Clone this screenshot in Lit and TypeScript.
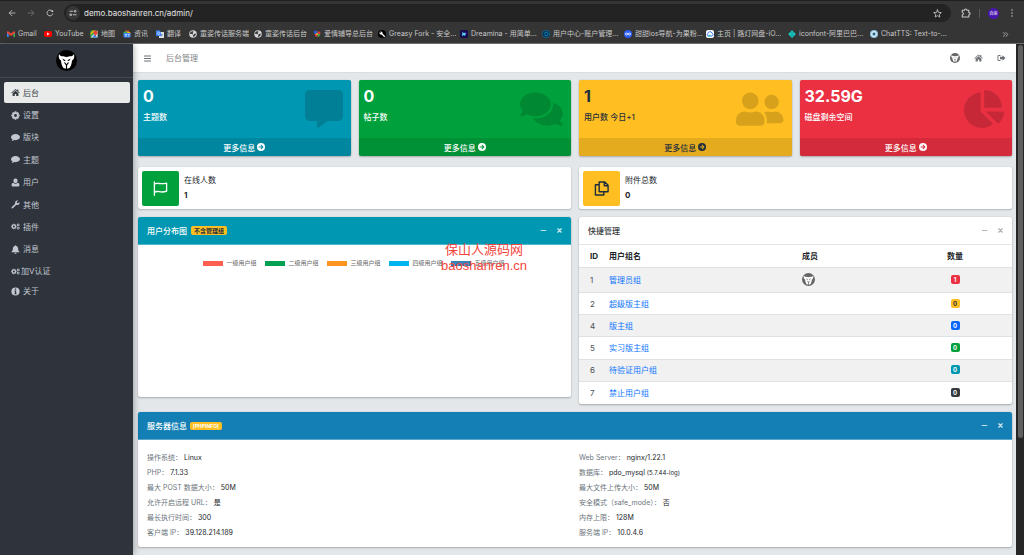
import { LitElement, html, css, svg, type TemplateResult } from "lit";
import { customElement } from "lit/decorators.js";

const gearPath = (cx: number, cy: number, r: number, hole: number, teeth = 8): string => {
  const pts: string[] = [];
  for (let i = 0; i < teeth; i++) {
    const a = (i / teeth) * Math.PI * 2;
    const w = Math.PI / teeth;
    for (const [off, rad] of [[-w * 0.95, 0.74], [-w * 0.5, 1], [w * 0.5, 1], [w * 0.95, 0.74]]) {
      pts.push(`${(cx + Math.sin(a + off) * r * rad).toFixed(2)} ${(cy - Math.cos(a + off) * r * rad).toFixed(2)}`);
    }
  }
  return `M${pts.join("L")}ZM${cx - hole} ${cy}a${hole} ${hole} 0 1 0 ${hole * 2} 0a${hole} ${hole} 0 1 0 ${-hole * 2} 0Z`;
};

const filled = (viewBox: string, d: string) =>
  html`<svg viewBox=${viewBox} fill="currentColor" fill-rule="evenodd" aria-hidden="true"><path d=${d} /></svg>`;

const stroked = (d: string, width = 1.6) =>
  html`<svg viewBox="0 0 16 16" fill="none" stroke="currentColor" stroke-width=${width} stroke-linecap="round" stroke-linejoin="round" aria-hidden="true"><path d=${d} /></svg>`;

const mask = (bg: string) => html`<svg viewBox="0 0 42 42" aria-hidden="true">
  <circle cx="21" cy="21" r="21" fill=${bg} />
  <path fill="#fff" d="M6 8C4.500 14 6 19 10 21C10.500 27 12 32 15 36Q21 39 27 36C30 32 31.500 27 32 21C36 19 37.500 14 36 8C34.500 11.500 31 13 27 12.500Q21 15 15 12.500C11 13 7.500 11.500 6 8Z" />
  <path fill=${bg} d="M12.500 17L19 20.500L18 22.500Q14 21.500 12.500 17ZM29.500 17L23 20.500L24 22.500Q28 21.500 29.500 17Z" />
  <path fill="none" stroke=${bg} stroke-width="2.400" d="M17 25L21 30L25 25M21 29V38" />
</svg>`;

const doubleGear = filled("0 0 22 16", gearPath(7, 8, 6.6, 2.5) + gearPath(17.5, 4, 3.7, 1.3, 6) + gearPath(17.5, 12, 3.7, 1.3, 6));
const bubble = filled("0 0 18 16", "M9 1C4.200 1 0 3.800 0 7.400c0 1.900 1.300 3.600 3.300 4.700c-.3 1.300-1 2.200-1.900 3c1.900-.1 3.500-.8 4.800-2c.9.2 1.800.3 2.800.3c4.800 0 9-2.700 9-6.200S13.800 1 9 1Z");

const icons: Record<string, TemplateResult> = {
  home: filled("0 0 18 16", "M9 1L0.500 8.300L1.500 9.500L9 3.200L16.500 9.500L17.500 8.300L14.700 5.900V2H12.500V4ZM9 4.500L3.200 9.400V15H7.500V11H10.500V15H14.800V9.400Z"),
  gear: filled("0 0 16 16", gearPath(8, 8, 7.600, 2.600)),
  bubble,
  user: filled("0 0 16 16", "M8 1a3.700 3.700 0 0 1 3.700 3.900C11.700 7.200 10 9 8 9S4.300 7.200 4.300 4.900A3.700 3.700 0 0 1 8 1ZM4 8.500C5 9.700 6.400 10.400 8 10.400S11 9.700 12 8.500C14 8.800 15 10.500 15 13C15 14.500 14 15.300 12.700 15.300H3.300C2 15.300 1 14.500 1 13C1 10.500 2 8.800 4 8.500Z"),
  wrench: filled("0 0 16 16", "M15.300 4.200C15.800 6.800 13.800 9 11.300 9C10.600 9 10 8.800 9.500 8.600L3.700 14.400C2.900 15.200 1.900 15.200 1.300 14.600C.7 14 .8 13.100 1.500 12.300L7.400 6.500C6.700 4 8.200 1 11.300 .8C12 .8 12.600 .9 13.100 1.200L10.300 2.900V4.900L12 5.900Z"),
  gears: doubleGear,
  bell: filled("0 0 16 16", "M8 .5C8.700.5 9.100 1 9.100 1.700C11.500 2.200 12.700 4.100 12.700 6.400C12.700 9.600 13.500 11 15.300 12.500V13H.7V12.500C2.500 11 3.300 9.600 3.300 6.400C3.300 4.100 4.500 2.200 6.900 1.700C6.900 1 7.300.5 8 .5ZM6 13.700H10C10 14.900 9.100 15.700 8 15.700S6 14.900 6 13.700Z"),
  info: filled("0 0 16 16", "M8 .7a7.300 7.300 0 1 1 0 14.600a7.300 7.300 0 1 1 0-14.600ZM6.900 2.700V4.900H9.200V2.700ZM6 6.200V7.500H6.900V11.500H6V12.800H10V11.500H9.200V6.200Z"),
  signout: filled("0 0 18 16", "M7 2H3.500Q1 2 1 4.500V11.500Q1 14 3.500 14H7V12.200H3.800Q2.800 12.200 2.800 11.200V4.800Q2.800 3.800 3.800 3.800H7ZM11 2.500L17 8L11 13.500V10.300H6V5.700H11Z"),
  menu: stroked("M2.500 3.500H13.500M2.500 8H13.500M2.500 12.500H13.500", 1.8),
  minus: stroked("M2.500 8H13.500", 2),
  times: stroked("M4 4L12 12M12 4L4 12", 2.600),
  go: filled("0 0 16 16", "M8 0a8 8 0 1 1 0 16a8 8 0 1 1 0-16ZM8.300 3.200L7.100 4.400L9.600 7H3.400V9H9.600L7.100 11.600L8.300 12.800L13.100 8Z"),
  flag: html`<svg viewBox="0 0 16 16" fill="none" stroke="currentColor" stroke-width="1.400" stroke-linejoin="round" stroke-linecap="round" aria-hidden="true"><path d="M1.500 1V15.200M1.500 3.200C5 1.200 7.500 4.200 14.500 2.200V10.800C8 13.500 5.500 9.700 1.500 11.800" /></svg>`,
  copy: html`<svg viewBox="0 0 16 16" fill="none" stroke="currentColor" stroke-width="1.500" stroke-linejoin="round" aria-hidden="true"><path d="M6.200 1H11.500L15 4.500V11.500H5.500V1ZM11 1V5H15M5.500 4H1.500V15H10.500V11.500" /></svg>`,
  commentAlt: filled("0 0 512 512", "M448 0H64C28.7 0 0 28.7 0 64v288c0 35.3 28.7 64 64 64h96v84c0 9.800 11.200 15.500 19.100 9.700L304 416h144c35.300 0 64-28.700 64-64V64c0-35.300-28.700-64-64-64z"),
  comments: filled("0 0 576 512", "M416 192c0-88.400-93.100-160-208-160S0 103.600 0 192c0 34.300 14.100 65.900 38 92-13.400 30.200-35.500 54.200-35.800 54.500-2.200 2.300-2.800 5.700-1.500 8.700S4.800 352 8 352c36.600 0 66.900-12.300 88.700-25 32.200 15.700 70.300 25 111.300 25 114.900 0 208-71.600 208-160zm122 220c23.900-26 38-57.700 38-92 0-66.900-53.500-124.200-129.300-148.100.9 6.600 1.300 13.300 1.300 20.100 0 105.900-107.700 192-240 192-10.800 0-21.300-.8-31.700-1.900C207.800 439.600 281.800 480 368 480c41 0 79.100-9.200 111.300-25 21.800 12.700 52.100 25 88.700 25 3.200 0 6.100-1.900 7.300-4.800 1.300-2.900.7-6.300-1.500-8.700-.3-.3-22.400-24.200-35.800-54.500z"),
  friends: filled("0 0 640 512", "M192 256c61.900 0 112-50.100 112-112S253.900 32 192 32 80 82.100 80 144s50.100 112 112 112zm76.800 32h-8.300c-20.800 10-43.900 16-68.500 16s-47.600-6-68.500-16h-8.300C51.600 288 0 339.600 0 403.200V432c0 26.500 21.500 48 48 48h288c26.500 0 48-21.500 48-48v-28.800c0-63.600-51.600-115.200-115.200-115.200zM480 256c53 0 96-43 96-96s-43-96-96-96-96 43-96 96 43 96 96 96zm48 32h-3.800c-13.900 4.800-28.600 8-44.200 8s-30.300-3.200-44.200-8H432c-20.400 0-39.200 5.900-55.700 15.400 24.400 26.300 39.700 61.200 39.700 99.800v38.400c0 2.200-.5 4.300-.6 6.400H592c26.500 0 48-21.500 48-48 0-61.900-50.100-112-112-112z"),
  pie: filled("0 0 544 512", "M527.790 288H290.500l158.030 158.030c6.040 6.040 15.980 6.530 22.190.68 38.700-36.460 65.320-85.610 73.130-140.860 1.340-9.460-6.510-17.850-16.060-17.850zm-15.830-64.800C503.720 103.740 408.260 8.280 288.800.04 279.680-.59 272 7.100 272 16.240V240h223.770c9.140 0 16.820-7.680 16.190-16.800zM224 288V50.710c0-9.550-8.390-17.400-17.840-16.060C86.990 51.490-4.100 155.600.14 280.370 4.500 408.510 114.830 513.590 243.030 511.980c50.400-.63 96.970-16.870 135.260-44.030 7.900-5.600 8.420-17.230 1.570-24.080L224 288z"),
  back: stroked("M14 8H2.500M8 2.500L2.500 8L8 13.500"),
  forward: stroked("M2 8H13.500M8 2.500L13.500 8L8 13.500"),
  reload: html`<svg viewBox="0 0 16 16" fill="none" stroke="currentColor" stroke-width="1.800" aria-hidden="true"><path d="M13.700 9A5.800 5.800 0 1 1 12.300 4L13.600 5.500" /><path d="M14.200 1.500V6H9.700Z" fill="currentColor" stroke="none" /></svg>`,
  tune: stroked("M2 4.500H7M9 11.500H14M10.500 4.500A1.800 1.800 0 1 0 14.100 4.500A1.800 1.800 0 1 0 10.500 4.500M1.900 11.500A1.800 1.800 0 1 0 5.500 11.500A1.800 1.800 0 1 0 1.900 11.500", 1.900),
  star: stroked("M8 1.500L9.900 6L14.800 6.400L11.100 9.600L12.200 14.400L8 11.800L3.800 14.400L4.900 9.600L1.200 6.400L6.100 6Z", 1.500),
  puzzle: stroked("M2 3.500H5.500A2 2 0 0 1 9.500 3.500H12.500V7A2 2 0 0 1 12.500 11V14.500H2V11.200A2.300 2.300 0 0 0 2 6.700Z", 1.700),
  dots: filled("0 0 16 16", "M6.500 2a1.500 1.500 0 1 0 3 0a1.500 1.500 0 1 0-3 0ZM6.500 8a1.500 1.500 0 1 0 3 0a1.500 1.500 0 1 0-3 0ZM6.500 14a1.500 1.500 0 1 0 3 0a1.500 1.500 0 1 0-3 0Z"),
  more: stroked("M3 3.500L7.500 8L3 12.500M9 3.500L13.500 8L9 12.500", 1.700),
};

const fav = (body: unknown) => html`<svg viewBox="0 0 16 16" aria-hidden="true">${body}</svg>`;
const globe = fav(svg`<circle cx="8" cy="8" r="7.500" fill="#d5d7da" /><path fill="#353535" d="M3 4Q5 2 8 2.300L9 4L7 6L8.500 8L7 9L4.500 7.500L2 8Q2 5.500 3 4ZM10 8L13.500 7Q14 10 11.500 12.500L8 14L8.500 10.500Z" />`);

const bookmarks: { label: string; icon: TemplateResult }[] = [
  { label: "Gmail", icon: fav(svg`<path d="M0 3V14H3.500V7Z" fill="#4285f4" /><path d="M16 3V14H12.500V7Z" fill="#34a853" /><path d="M0 3Q1 1.500 3 3L8 7L13 3Q15 1.500 16 3V6L8 12L0 6Z" fill="#ea4335" />`) },
  { label: "YouTube", icon: fav(svg`<rect y="2" width="16" height="12" rx="3.500" fill="#f00" /><path d="M6.300 5.200V10.800L11 8Z" fill="#fff" />`) },
  { label: "地图", icon: fav(svg`<rect x="1" y="1" width="14" height="14" fill="#34a853" /><path d="M1 15L15 1V15Z" fill="#e8eaed" /><path d="M1 10L10 1H6L1 6Z" fill="#fbbc04" /><path d="M4 15L9 9L15 15Z" fill="#4285f4" /><path d="M11 1a4 4 0 0 1 4 4c0 3-4 7-4 7S7 8 7 5a4 4 0 0 1 4-4Z" fill="#ea4335" />`) },
  { label: "资讯", icon: fav(svg`<path d="M4 1H12V8H4Z" fill="#ea4335" /><path d="M1 4L8 2L10 8H1Z" fill="#34a853" /><path d="M9 3L15 5V8H8Z" fill="#fbbc04" /><rect y="6" x="1" width="14" height="9" rx="1.500" fill="#4285f4" /><path d="M4 9H8M4 12H8M10 9H13M10 12H13" stroke="#fff" stroke-width="1.300" />`) },
  { label: "翻译", icon: fav(svg`<rect x="6" y="4" width="10" height="12" rx="1" fill="#dfe3e8" /><path d="M0 1H8L12 12H1Q0 12 0 11Z" fill="#4285f4" /><path d="M7.500 5.500A2.400 2.400 0 1 0 7.700 7.300H5.500" stroke="#fff" fill="none" /><path d="M10 9H14M12 8V9Q12 12 10 13" stroke="#607d8b" fill="none" />`) },
  { label: "童姿传话服务端", icon: globe },
  { label: "童姿传话后台", icon: globe },
  { label: "爱情辅导总后台", icon: fav(svg`<path d="M1 3L7 1L9 6L4 9Z" fill="#2962d9" /><path d="M9 2L15 4L14 8L9 7Z" fill="#e53935" /><path d="M3 8L8 8L9 14L5 13Z" fill="#e53935" /><path d="M9 8L15 8L12 14L9 13Z" fill="#43a047" /><circle cx="8" cy="8" r="2" fill="#fbc02d" />`) },
  { label: "Greasy Fork - 安全...", icon: fav(svg`<circle cx="8" cy="8" r="8" fill="#000" /><path d="M7.500 7.500L12.500 12.500" stroke="#fff" stroke-width="2.800" stroke-linecap="round" /><circle cx="6" cy="6" r="3" fill="#fff" /><path d="M3 3L5.500 5.500" stroke="#000" stroke-width="1.600" />`) },
  { label: "Dreamina - 用简单...", icon: fav(svg`<rect width="16" height="16" rx="3" fill="#160b4f" /><path d="M5 3L7 6L12 6L10 12L7 10L4 13Z" fill="#52d9f2" /><path d="M9 4L13 7L11 9Z" fill="#8c6bff" />`) },
  { label: "用户中心-账户管理...", icon: fav(svg`<circle cx="8" cy="8" r="7.200" fill="#06263b" stroke="#087ab5" stroke-width="1.400" /><path d="M6 4.500H8.500A3.500 3.500 0 0 1 8.500 11.500H6Z" fill="none" stroke="#159be0" stroke-width="1.600" />`) },
  { label: "甜甜ios导航-为果粉...", icon: fav(svg`<circle cx="8" cy="8" r="8" fill="#2b5cf0" /><path d="M8 8C6 5 3 5.500 3 8S6 11 8 8S13 5.500 13 8S10 11 8 8Z" fill="none" stroke="#fff" stroke-width="1.600" />`) },
  { label: "主页 | 路灯网盘-iO...", icon: fav(svg`<rect width="16" height="16" rx="4" fill="#fff" /><path d="M4 12A3 3 0 0 1 3.500 7A4.500 4.500 0 0 1 12 6A3.300 3.300 0 0 1 12 12Z" fill="none" stroke="#2563ff" stroke-width="1.800" /><path d="M4 12H8V9" fill="none" stroke="#20c9a6" stroke-width="1.800" />`) },
  { label: "iconfont-阿里巴巴...", icon: fav(svg`<path d="M8 0L12 5H4ZM0 8L4 5V11ZM16 8L12 5V11ZM8 16L3 11H13Z" fill="#10c7c1" /><rect x="3" y="5" width="10" height="6" fill="#19dcd1" /><path d="M5 8H11" stroke="#0b6f77" stroke-width="1.600" />`) },
  { label: "ChatTTS: Text-to-...", icon: fav(svg`<circle cx="8" cy="8" r="8" fill="#8ec1dd" /><circle cx="8" cy="8" r="5" fill="none" stroke="#fff" stroke-width="1.500" /><circle cx="8" cy="8" r="2.500" fill="#34607d" />`) },
];

const shared = css`
  * { box-sizing: border-box; }
  svg { display: block; width: 100%; height: 100%; }
  button { font: inherit; color: inherit; background: none; border: 0; padding: 0; margin: 0; }
  a { color: inherit; text-decoration: none; }
`;

@customElement("browser-bar")
class BrowserBar extends LitElement {
  static styles = [shared, css`
    :host { display: block; background: #353535; color: #c8c8c8; font-size: 7px; border-top: 1px solid #1f1f1f; border-bottom: 1px solid #6e6e6e; }
    .toolbar { display: flex; align-items: center; height: 24px; padding: 0 8px; }
    .tool { width: 8px; height: 8px; margin-right: 11px; flex: none; }
    .dim { color: #777; }
    .address { flex: 1; display: flex; align-items: center; height: 18px; border-radius: 9px; background: #232323; padding: 0 9px 0 2px; margin-left: -1px; }
    .site { width: 14px; height: 14px; border-radius: 50%; background: #363636; padding: 3px; flex: none; }
    .url { flex: 1; min-width: 0; border: 0; outline: 0; background: none; color: #e4e4e4; font: 400 7px Inter, "Noto Sans CJK SC", sans-serif; padding: 0 0 0 4px; }
    .star { width: 9px; height: 9px; flex: none; }
    .end { display: flex; align-items: center; gap: 8px; padding-left: 10px; }
    .ext { width: 10px; height: 10px; }
    .sep { width: 1px; height: 9px; background: #5a5a5a; }
    .avatar { width: 11px; height: 11px; border-radius: 50%; background: #4a16b0; color: #fff; font-size: 4px; line-height: 11px; text-align: center; white-space: nowrap; }
    .dots { width: 8px; height: 8px; margin-left: 1px; }
    .marks { display: flex; align-items: center; height: 18px; padding: 0 15px 0 7px; }
    .grid { flex: 1; display: grid; grid-template-columns: 37px 46px 33px 33px 33px 65px 59px 65px repeat(7, 82px); }
    .mark { display: flex; align-items: center; gap: 3px; white-space: nowrap; line-height: 12px; }
    .mark svg { width: 8px; height: 8px; flex: none; }
    .more { width: 7px; height: 7px; }
    .url { font-size: 8px; }
  `];

  render() {
    return html`
      <div class="toolbar">
        <button class="tool" aria-label="后退">${icons.back}</button>
        <button class="tool dim" aria-label="前进">${icons.forward}</button>
        <button class="tool" aria-label="重新加载">${icons.reload}</button>
        <div class="address">
          <button class="site" aria-label="网站信息">${icons.tune}</button>
          <input class="url" aria-label="地址" value="demo.baoshanren.cn/admin/" />
          <button class="star" aria-label="收藏">${icons.star}</button>
        </div>
        <div class="end">
          <button class="ext" aria-label="扩展">${icons.puzzle}</button>
          <span class="sep"></span>
          <button class="avatar">自荣</button>
          <button class="dots" aria-label="菜单">${icons.dots}</button>
        </div>
      </div>
      <nav class="marks">
        <div class="grid">${bookmarks.map((b) => html`<a class="mark" href="#">${b.icon}<span>${b.label}</span></a>`)}</div>
        <button class="more" aria-label="更多书签">${icons.more}</button>
      </nav>`;
  }
}

@customElement("side-nav")
class SideNav extends LitElement {
  static styles = [shared, css`
    :host { display: block; background: #2f343c; color: #c2c7d0; font-size: 8px; box-shadow: 0 0 7px rgba(0, 0, 0, 0.4); z-index: 2; }
    .brand { display: flex; justify-content: center; align-items: center; height: 34px; border-bottom: 1px solid #454a52; }
    .brand svg { width: 21px; height: 21px; }
    .list { list-style: none; margin: 0; padding: 4px 3px 0 4px; display: grid; grid-auto-rows: 1fr; gap: 1px; height: 182px; }
    .tail { padding-top: 1px; height: 41px; gap: 0; }
    .link { display: flex; align-items: center; gap: 3px; height: 100%; padding: 0 7px; border-radius: 2px; line-height: 12px; }
    .active { background: #e9ebea; color: #343a40; }
    .glyph { width: 9px; height: 9px; flex: none; }
    .tail .link { gap: 1px; }
    .tail li:last-child .link { gap: 3px; }
  `];

  render() {
    const item = (icon: string, label: string, active = false) => html`
      <li><a class="link ${active ? "active" : ""}" href="#"><span class="glyph">${icons[icon]}</span>${label}</a></li>`;
    return html`
      <div class="brand">${mask("#000")}</div>
      <nav>
        <ul class="list">
          ${item("home", "后台", true)}${item("gear", "设置")}${item("bubble", "版块")}${item("bubble", "主题")}
          ${item("user", "用户")}${item("wrench", "其他")}${item("gears", "插件")}${item("bell", "消息")}
        </ul>
        <ul class="list tail">${item("gears", "加V认证")}${item("info", "关于")}</ul>
      </nav>`;
  }
}

@customElement("stat-box")
class StatBox extends LitElement {
  static properties = { value: {}, label: {}, icon: {}, tone: {} };
  declare value: string;
  declare label: string;
  declare icon: string;
  declare tone: string;

  static styles = [shared, css`
    :host { display: block; }
    .box { border-radius: 2px; color: #fff; overflow: hidden; box-shadow: 0 0 1px rgba(0, 0, 0, 0.2), 0 1px 2px rgba(0, 0, 0, 0.25); }
    .teal { background: #0097b2; }
    .green { background: #00a13c; }
    .amber { background: #ffbf22; color: #1f2d3d; }
    .red { background: #eb3042; }
    .inner { display: flex; justify-content: space-between; height: 58px; padding: 6px 8px 0 5px; }
    .value { font-size: 16px; font-weight: 700; line-height: 20px; }
    .label { font-size: 8px; font-weight: 500; line-height: 12px; margin-top: 5px; }
    .art { height: 38px; margin-top: 4px; opacity: 0.15; color: #000; }
    .art svg { width: auto; height: 100%; }
    .more { display: flex; align-items: center; justify-content: center; gap: 2px; height: 18px; background: rgba(0, 0, 0, 0.1); font-size: 8px; font-weight: 500; }
    .go { width: 8px; height: 8px; }
  `];

  render() {
    return html`<section class="box ${this.tone}">
      <div class="inner">
        <div><div class="value">${this.value}</div><div class="label">${this.label}</div></div>
        <div class="art">${icons[this.icon]}</div>
      </div>
      <a class="more" href="#">更多信息 <span class="go">${icons.go}</span></a>
    </section>`;
  }
}

@customElement("panel-card")
class PanelCard extends LitElement {
  static properties = { heading: {}, tag: {}, tone: {} };
  declare heading: string;
  declare tag: string;
  declare tone: string;

  static styles = [shared, css`
    :host { display: block; background: #fff; border-radius: 2px; box-shadow: 0 0 1px rgba(0, 0, 0, 0.2), 0 1px 2px rgba(0, 0, 0, 0.25); }
    .head { display: flex; align-items: center; height: 28px; padding: 0 8px 0 9px; border-radius: 2px 2px 0 0; border-bottom: 1px solid #e3e6e9; color: #343a40; }
    .teal { background: #0097b2; color: #fff; border-color: #4db6c9; }
    .blue { background: #147fb4; color: #fff; border-color: #5ba5ca; }
    .title { margin: 0; font-size: 8px; font-weight: 500; line-height: 12px; }
    .tag { margin-left: 4px; padding: 0 3px; border-radius: 2px; background: #ffbf22; color: #1f2d3d; font-size: 6px; font-weight: 700; line-height: 9px; }
    .blue .tag { margin-left: 3px; color: #fff; font-size: 5px; line-height: 8px; }
    .tools { display: flex; gap: 9px; margin-left: auto; opacity: 0.85; }
    .plain .tools { color: #98a0a8; }
    .tool { width: 7px; height: 7px; }
  `];

  render() {
    return html`
      <header class="head ${this.tone}">
        <h3 class="title">${this.heading}</h3>
        ${this.tag ? html`<span class="tag">${this.tag}</span>` : ""}
        <div class="tools">
          <button class="tool" aria-label="折叠">${icons.minus}</button>
          <button class="tool" aria-label="关闭">${icons.times}</button>
        </div>
      </header>
      <slot></slot>`;
  }
}

@customElement("app-root")
class AppRoot extends LitElement {
  static styles = [shared, css`
    :host { display: flex; flex-direction: column; height: 100vh; overflow: hidden; background: #e4e7ea; color: #212529; font-family: Inter, "Noto Sans CJK SC", sans-serif; font-size: 8px; }
    .shell { flex: 1; min-height: 0; display: grid; grid-template-columns: 133px minmax(0, 1fr) 8px; }
    .topbar { display: flex; align-items: center; height: 29px; padding: 0 10px; background: #fff; border-bottom: 1px solid #dadde0; color: #6c6f73; }
    .menu { width: 9px; height: 9px; }
    .crumb { margin-left: 14px; line-height: 12px; color: #808386; }
    .actions { display: flex; align-items: center; gap: 14px; margin-left: auto; }
    .face { width: 10px; height: 10px; }
    .act { width: 9px; height: 8px; }
    .content { display: flex; flex-direction: column; gap: 8px; padding: 7px 4px 7px 5px; }
    .stats { display: grid; grid-template-columns: repeat(4, minmax(0, 1fr)); gap: 8px; padding-bottom: 3px; }
    .halves { display: grid; grid-template-columns: repeat(2, minmax(0, 1fr)); gap: 8px; align-items: start; }
    .info { display: flex; align-items: center; gap: 5px; height: 42px; padding: 4px; background: #fff; border-radius: 2px; box-shadow: 0 0 1px rgba(0, 0, 0, 0.2), 0 1px 2px rgba(0, 0, 0, 0.2); }
    .badge-icon { width: 37px; height: 35px; flex: none; padding: 10px 11px; border-radius: 2px; color: #fff; background: #00a13c; }
    .badge-icon.amber { background: #ffbf22; color: #1f2d3d; }
    .info-text { line-height: 15px; }
    .info-num { font-weight: 700; }
    .chart { position: relative; height: 152px; padding-top: 14px; }
    .legend { list-style: none; display: flex; justify-content: center; gap: 6px; margin: 0; padding: 0; font-size: 6px; line-height: 8px; color: #666; }
    .legend-item { display: flex; align-items: center; gap: 4px; width: 56px; white-space: nowrap; }
    .swatch { width: 20px; height: 5px; flex: none; }
    .coral { background: #ff5f4e; }
    .jade { background: #00a152; }
    .orange { background: #ff9420; }
    .sky { background: #00b4f0; }
    .steel { background: #3584b8; }
    .watermark { position: absolute; right: 44px; top: -3px; margin: 0; text-align: center; font: 13px/16px "Liberation Sans", "Noto Sans CJK SC", sans-serif; color: #f5443c; }
    .groups { width: 100%; height: 159px; border-collapse: collapse; table-layout: fixed; }
    .groups th, .groups td { padding: 0; text-align: left; border-top: 1px solid #dee2e6; line-height: 12px; }
    .groups thead th { border-top: 0; height: 22px; font-weight: 700; }
    .groups tbody tr { height: 22px; }
    .groups tbody tr:first-child { height: 25px; }
    .groups tbody tr:nth-child(odd) { background: #f1f1f2; }
    .groups .id { width: 30px; padding-left: 11px; }
    .groups .name { width: 193px; }
    .groups .count { width: 114px; text-align: center; }
    .groups tbody .id { color: #4a4f54; }
    .group-link { color: #0d75fd; }
    .member { display: block; width: 13px; height: 13px; }
    .pill { display: inline-block; width: 9px; border-radius: 2px; font-size: 6px; font-weight: 700; line-height: 9px; color: #fff; vertical-align: 1px; text-align: center; }
    .p-red { background: #eb3042; }
    .p-amber { background: #ffbf22; color: #1f2d3d; }
    .p-blue { background: #0866ff; }
    .p-green { background: #00a13c; }
    .p-teal { background: #0097b2; }
    .p-dark { background: #343a40; }
    .server { display: grid; grid-template-columns: repeat(2, minmax(0, 1fr)); gap: 8px; padding: 10px 9px 7px; font-size: 7px; }
    .facts { margin: 0; }
    .fact { display: flex; align-items: center; gap: 2px; line-height: 15px; white-space: nowrap; }
    .fact dt { color: #6c757d; }
    .fact dd { margin: 0; color: #212529; }
    .fact small { font-size: 6px; }
    .scroll { background: #262626; padding: 1px 1px 0 2px; }
    .thumb { height: 393px; border-radius: 3px; background: #606060; }
  `];

  private groups = [
    [1, "管理员组", 1, "p-red"], [2, "超级版主组", 0, "p-amber"], [4, "版主组", 0, "p-blue"],
    [5, "实习版主组", 0, "p-green"], [6, "待验证用户组", 0, "p-teal"], [7, "禁止用户组", 0, "p-dark"],
  ] as const;

  private legend = [["coral", "一"], ["jade", "二"], ["orange", "三"], ["sky", "四"], ["steel", "五"]];

  private hostFacts: [string, unknown][] = [
    ["操作系统：", "Linux"], ["PHP：", "7.1.33"], ["最大 POST 数据大小：", "50M"],
    ["允许开启远程 URL：", "是"], ["最长执行时间：", "300"], ["客户端 IP：", "39.128.214.189"],
  ];

  private serverFacts: [string, unknown][] = [
    ["Web Server：", "nginx/1.22.1"], ["数据库：", html`pdo_mysql <small>(5.7.44-log)</small>`], ["最大文件上传大小：", "50M"],
    ["安全模式（safe_mode）：", "否"], ["内存上限：", "128M"], ["服务端 IP：", "10.0.4.6"],
  ];

  private facts(rows: [string, unknown][]) {
    return html`<dl class="facts">${rows.map(([k, v]) => html`<div class="fact"><dt>${k}</dt><dd>${v}</dd></div>`)}</dl>`;
  }

  render() {
    return html`
      <browser-bar></browser-bar>
      <div class="shell">
        <side-nav></side-nav>
        <main>
          <header class="topbar">
            <button class="menu" aria-label="切换菜单">${icons.menu}</button>
            <a class="crumb" href="#">后台管理</a>
            <div class="actions">
              <a class="face" href="#" aria-label="个人">${mask("#666")}</a>
              <a class="act" href="#" aria-label="首页">${icons.home}</a>
              <a class="act" href="#" aria-label="退出">${icons.signout}</a>
            </div>
          </header>
          <div class="content">
            <div class="stats">
              <stat-box value="0" label="主题数" icon="commentAlt" tone="teal"></stat-box>
              <stat-box value="0" label="帖子数" icon="comments" tone="green"></stat-box>
              <stat-box value="1" label="用户数 今日+1" icon="friends" tone="amber"></stat-box>
              <stat-box value="32.59G" label="磁盘剩余空间" icon="pie" tone="red"></stat-box>
            </div>
            <div class="halves">
              <section class="info"><span class="badge-icon">${icons.flag}</span><div class="info-text"><div>在线人数</div><div class="info-num">1</div></div></section>
              <section class="info"><span class="badge-icon amber">${icons.copy}</span><div class="info-text"><div>附件总数</div><div class="info-num">0</div></div></section>
            </div>
            <div class="halves">
              <panel-card heading="用户分布图" tag="不含管理组" tone="teal">
                <div class="chart">
                  <ul class="legend">${this.legend.map(([c, n]) => html`<li class="legend-item"><span class="swatch ${c}"></span>${n}级用户组</li>`)}</ul>
                  <p class="watermark">保山人源码网<br />baoshanren.cn</p>
                </div>
              </panel-card>
              <panel-card heading="快捷管理" tone="plain">
                <table class="groups">
                  <thead><tr><th class="id">ID</th><th class="name">用户组名</th><th>成员</th><th class="count">数量</th></tr></thead>
                  <tbody>
                    ${this.groups.map(([id, name, n, tone]) => html`<tr>
                      <td class="id">${id}</td>
                      <td class="name"><a class="group-link" href="#">${name}</a></td>
                      <td>${id === 1 ? html`<a class="member" href="#" aria-label="成员">${mask("#666")}</a>` : ""}</td>
                      <td class="count"><span class="pill ${tone}">${n}</span></td>
                    </tr>`)}
                  </tbody>
                </table>
              </panel-card>
            </div>
            <panel-card heading="服务器信息" tag="[PHPINFO]" tone="blue">
              <div class="server">${this.facts(this.hostFacts)}${this.facts(this.serverFacts)}</div>
            </panel-card>
          </div>
        </main>
        <div class="scroll"><div class="thumb"></div></div>
      </div>`;
  }
}
